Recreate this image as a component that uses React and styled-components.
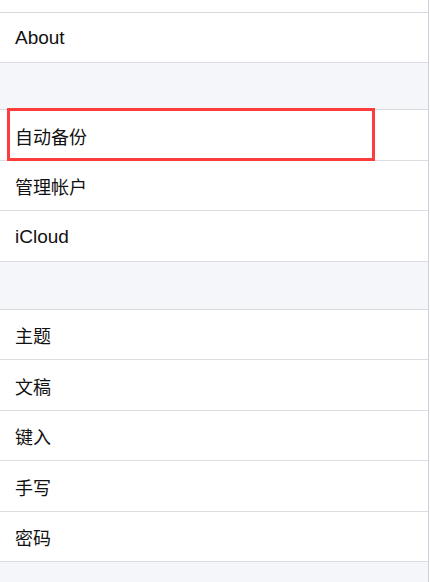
import React from "react";
import styled, { createGlobalStyle } from "styled-components";

const sections = [
  ["About"],
  ["自动备份", "管理帐户", "iCloud"],
  ["主题", "文稿", "键入", "手写", "密码"],
];

const isLatin = (text) => /^[A-Za-z]+$/.test(text);

const App = () => {
  return (
    <>
      <GlobalStyle />
      <Page>
        <TopCut />
        {sections.map((rows, i) => (
          <React.Fragment key={i}>
            {i > 0 && <Gap tall={i === 2} />}
            {rows.map((label) => (
              <Row key={label}>
                <Label latin={isLatin(label)}>{label}</Label>
                {label === "自动备份" && <Highlight />}
              </Row>
            ))}
          </React.Fragment>
        ))}
      </Page>
    </>
  );
};

export default App;

// Styled Components
const GlobalStyle = createGlobalStyle`
  html, body {
    margin: 0;
    padding: 0;
    background: #ffffff;
  }
  body {
    font-family: "Liberation Sans", "Noto Sans CJK SC", sans-serif;
    -webkit-font-smoothing: antialiased;
  }
`;

const Page = styled.div`
  width: 429px;
  min-height: 100vh;
  box-sizing: border-box;
  border-right: 1px solid #cdcfd9;
  background: #f5f6fa;
  overflow: hidden;
`;

const TopCut = styled.div`
  height: 12.5px;
  box-sizing: border-box;
  background: #ffffff;
  border-bottom: 1px solid #d8d9de;
`;

const Gap = styled.div`
  height: ${(p) => (p.tall ? "48px" : "47px")};
  box-sizing: border-box;
  background: #f5f6fa;
  border-bottom: 1px solid #d8d9de;
`;

const Row = styled.div`
  position: relative;
  display: flex;
  align-items: center;
  height: 50.5px;
  box-sizing: border-box;
  padding: 2px 0 0 15px;
  background: #ffffff;
  border-bottom: 1px solid #dcdde2;
`;

const Label = styled.span`
  font-size: ${(p) => (p.latin ? "19px" : "18px")};
  color: #111111;
`;

const Highlight = styled.div`
  position: absolute;
  top: -2px;
  left: 7px;
  width: 368px;
  height: 53px;
  box-sizing: border-box;
  border: 3px solid #fd3c3c;
  pointer-events: none;
`;
